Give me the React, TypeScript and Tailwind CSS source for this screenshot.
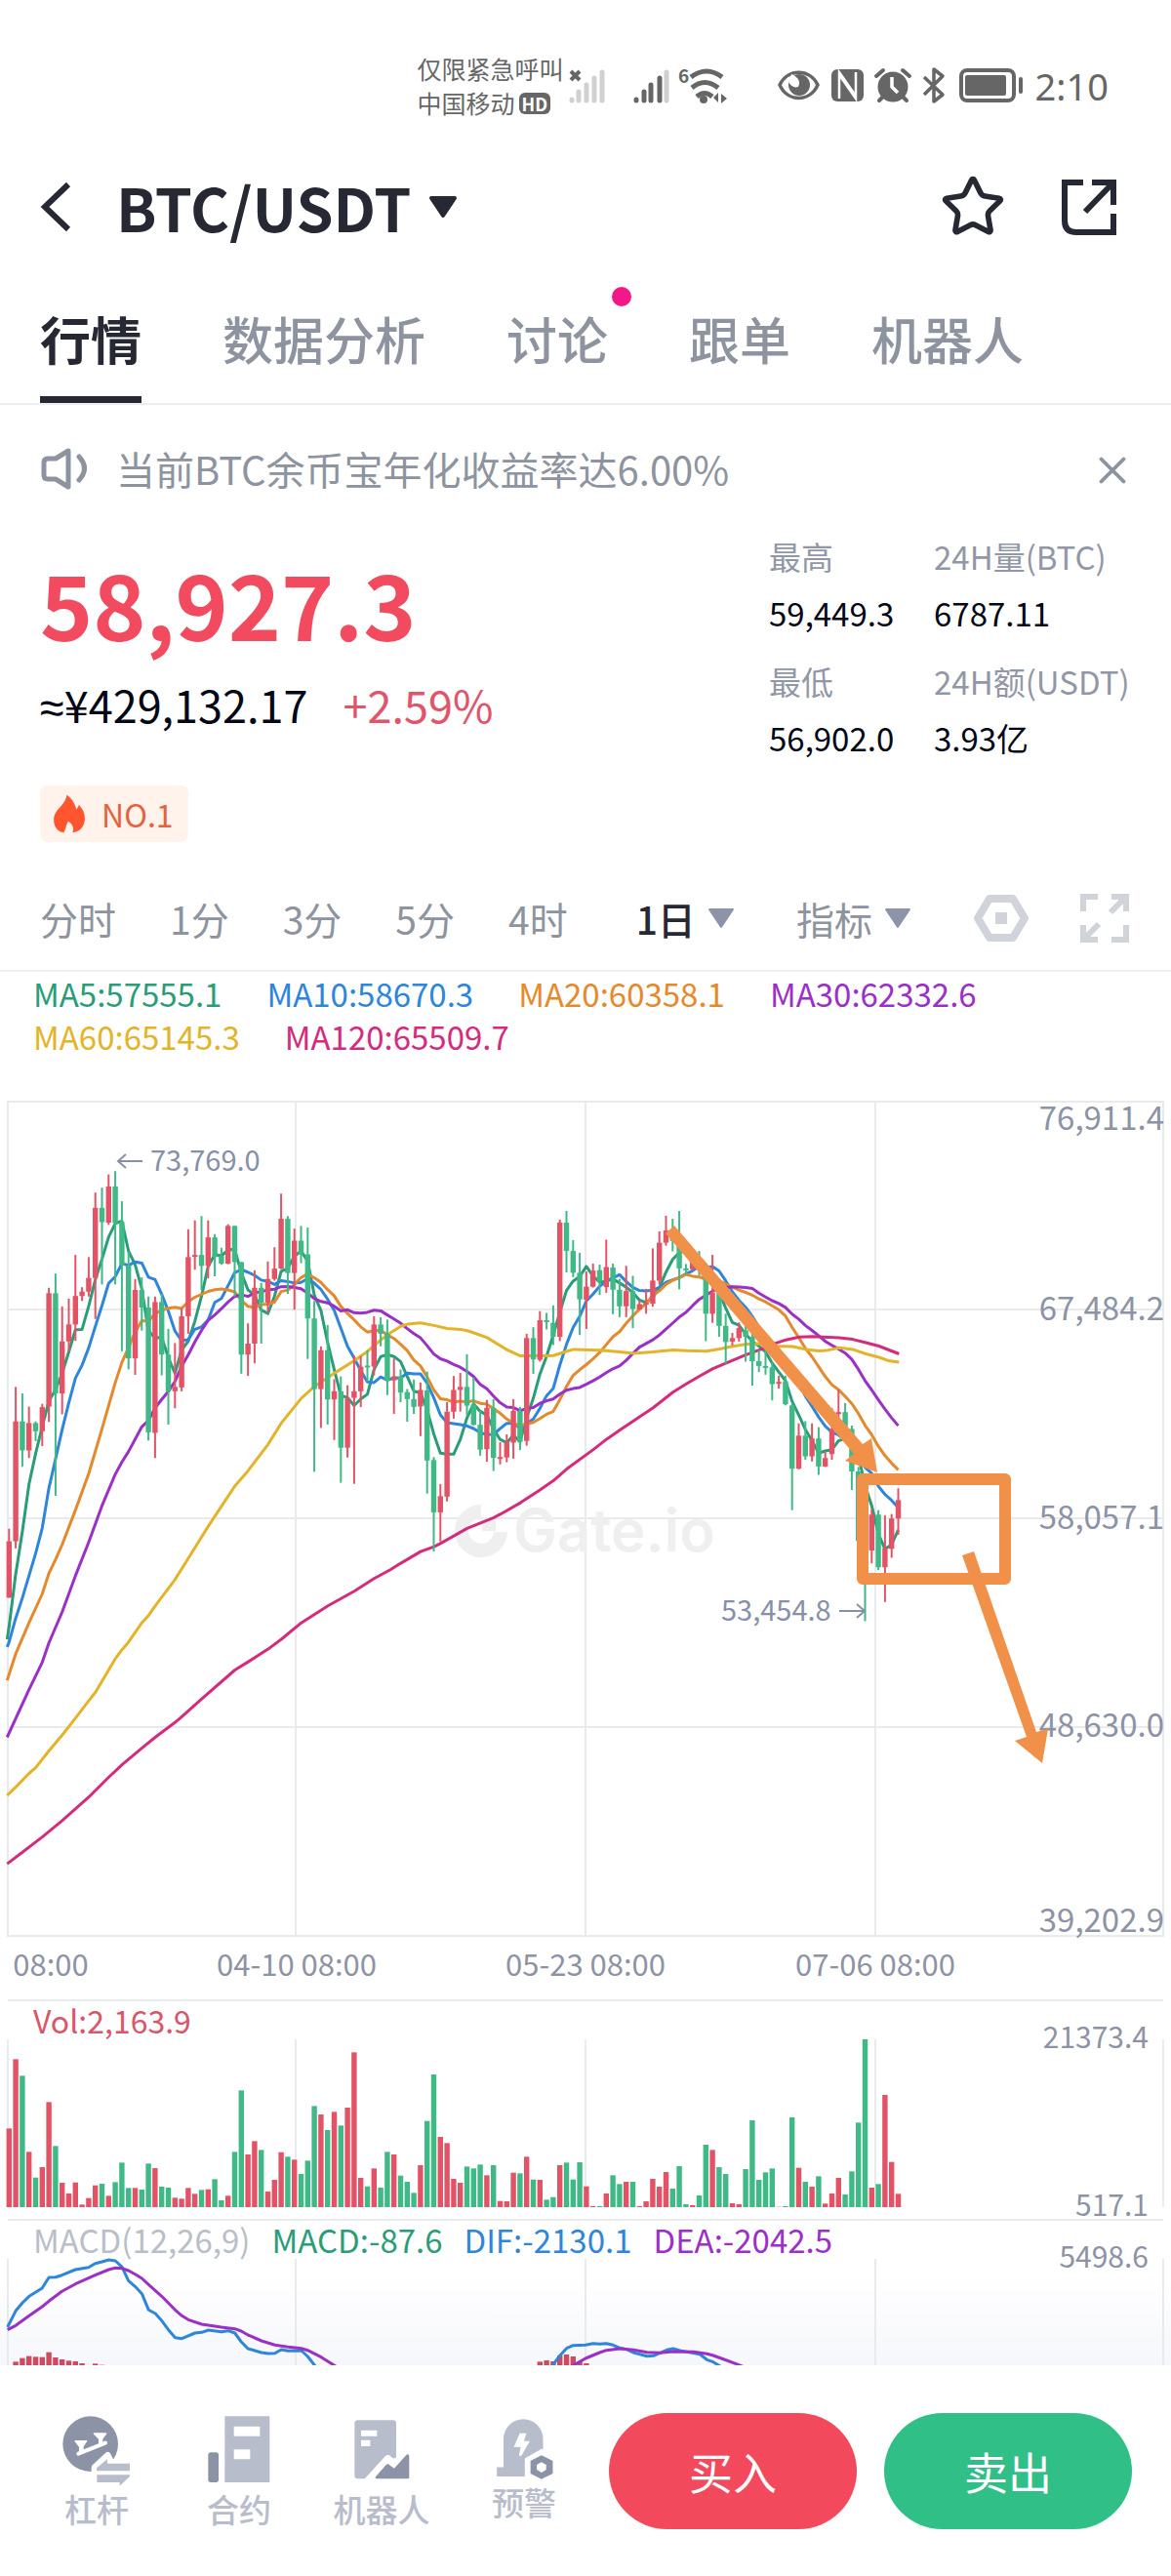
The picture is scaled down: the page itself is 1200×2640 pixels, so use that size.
import React from "react";
import { Star, X } from "lucide-react";

const RED = "#e35365";
const GREEN = "#3fb986";
const FONT = '"Noto Sans CJK SC", "Noto Sans", sans-serif';

type Candle = [string, number, number, number, number];
type Point = [number, number];

/* direction, high, body top, body bottom, low */
const BLOCK_A: Candle[] = [
  ["r", 796, 819, 922, 922], ["r", 537, 600, 819, 832], ["g", 549, 600, 653, 683], ["r", 573, 603, 653, 667],
  ["g", 600, 603, 618, 636], ["r", 568, 574, 618, 645], ["r", 356, 366, 573, 601], ["g", 330, 366, 549, 736],
  ["r", 390, 454, 549, 587], ["r", 376, 423, 454, 473], ["r", 296, 371, 423, 453], ["r", 355, 363, 371, 380],
  ["r", 300, 338, 363, 372], ["r", 182, 210, 338, 413], ["g", 173, 210, 236, 350], ["r", 149, 171, 237, 241],
  ["g", 143, 171, 238, 350], ["g", 198, 236, 315, 472], ["g", 290, 315, 485, 505], ["r", 340, 360, 485, 515],
  ["g", 337, 360, 392, 434], ["g", 372, 392, 620, 635], ["r", 372, 382, 621, 667], ["g", 367, 382, 478, 516],
  ["g", 431, 478, 545, 606], ["r", 457, 537, 545, 576], ["r", 393, 408, 538, 545], ["r", 249, 300, 408, 440],
  ["r", 233, 296, 299, 323], ["g", 225, 296, 316, 360], ["r", 233, 264, 316, 339], ["g", 258, 264, 300, 335],
  ["g", 283, 298, 312, 314], ["r", 240, 243, 312, 313], ["g", 243, 243, 309, 372], ["g", 309, 309, 478, 513],
  ["r", 421, 458, 478, 517], ["r", 324, 356, 458, 494], ["g", 347, 356, 383, 458], ["r", 308, 340, 383, 401],
  ["r", 282, 321, 340, 343], ["r", 184, 230, 321, 322], ["g", 225, 230, 329, 367], ["r", 248, 270, 329, 396],
  ["g", 243, 270, 295, 311], ["g", 246, 295, 412, 486], ["g", 380, 412, 541, 692], ["r", 463, 470, 541, 612],
  ["g", 424, 470, 560, 606], ["r", 523, 545, 560, 634], ["g", 518, 545, 648, 712], ["r", 534, 558, 648, 666],
  ["r", 480, 545, 557, 714], ["r", 481, 500, 545, 574], ["g", 470, 498, 501, 527], ["r", 408, 423, 500, 516],
  ["g", 410, 423, 440, 463], ["g", 414, 440, 526, 552],
];
const BLOCK_B: Candle[] = [
  ["r", 610, 651, 660, 737], ["g", 635, 651, 688, 710], ["g", 680, 687, 703, 755], ["g", 658, 703, 721, 737],
  ["r", 665, 682, 720, 788], ["g", 640, 683, 844, 920], ["g", 836, 843, 963, 1053], ["r", 898, 926, 963, 1030],
  ["r", 710, 732, 927, 938], ["r", 650, 682, 732, 748], ["r", 643, 675, 682, 732], ["g", 600, 675, 718, 741],
  ["g", 653, 716, 762, 764], ["g", 730, 762, 819, 833], ["r", 705, 723, 818, 847], ["g", 703, 723, 838, 868],
  ["r", 802, 836, 838, 853], ["r", 784, 801, 837, 848], ["r", 703, 730, 803, 840], ["g", 721, 730, 801, 820],
  ["r", 553, 563, 799, 810], ["g", 538, 563, 612, 645], ["r", 501, 522, 613, 617], ["g", 505, 522, 526, 543],
  ["g", 488, 528, 560, 579], ["r", 291, 298, 560, 570], ["g", 271, 298, 363, 412], ["g", 338, 363, 413, 423],
  ["g", 367, 413, 474, 556], ["r", 410, 445, 475, 542], ["r", 392, 408, 445, 447], ["g", 394, 407, 433, 464],
  ["r", 337, 400, 446, 459], ["g", 392, 401, 452, 508], ["g", 427, 452, 490, 515], ["r", 397, 455, 490, 515],
  ["g", 420, 455, 496, 540], ["r", 478, 485, 497, 499], ["r", 450, 482, 485, 507], ["r", 357, 431, 484, 491],
  ["r", 318, 344, 431, 440], ["r", 282, 316, 344, 351], ["g", 289, 318, 340, 364], ["g", 271, 330, 403, 451],
  ["g", 393, 403, 406, 418], ["r", 370, 380, 405, 408], ["g", 363, 380, 400, 420], ["g", 390, 400, 507, 570],
  ["r", 372, 458, 507, 528], ["g", 450, 460, 535, 560], ["g", 507, 535, 572, 622], ["r", 551, 563, 571, 580],
  ["r", 527, 540, 563, 571], ["g", 520, 545, 560, 617], ["g", 550, 560, 616, 672], ["g", 590, 616, 627, 641],
  ["g", 592, 627, 630, 647],
];
const BLOCK_C: Candle[] = [
  ["g", 480, 490, 520, 549], ["r", 505, 516, 519, 528], ["g", 505, 515, 556, 558], ["g", 556, 558, 671, 745],
  ["r", 590, 612, 671, 672], ["g", 586, 612, 649, 655], ["r", 590, 617, 649, 658], ["g", 597, 617, 667, 682],
  ["r", 640, 652, 667, 668], ["r", 563, 600, 645, 655], ["r", 530, 570, 573, 580], ["g", 554, 570, 597, 600],
  ["g", 594, 600, 676, 709], ["g", 668, 676, 800, 805], ["g", 790, 800, 860, 943], ["r", 744, 753, 817, 840],
  ["g", 745, 753, 847, 852], ["r", 754, 813, 847, 909], ["r", 752, 760, 814, 830], ["r", 706, 727, 760, 789],
];

const TOP = 1120;
const scaleBlock = (rows: Candle[], unit: number): Candle[] =>
  rows.map(([d, a, b, c, e]): Candle => [d, TOP + a / unit, TOP + b / unit, TOP + c / unit, TOP + e / unit]);

const CANDLES: Candle[] = [...scaleBlock(BLOCK_A, 1.782), ...scaleBlock(BLOCK_B, 2.24), ...scaleBlock(BLOCK_C, 1.742)];
const CLOSES = CANDLES.map((c) => (c[0] === "r" ? c[2] : c[3]));
const cx = (i: number) => 9.3 + 6.8 * i;

const seg = (points: Point[], x0: number, unit: number): Point[] =>
  points.map(([x, y]): Point => [x0 + x / 3, TOP + y / unit]);

/* moving average of the closes, led in by the part older than the first candle */
function average(n: number, lead: Point[]): Point[] {
  const out = seg(lead, 0, 1.782);
  for (let i = n - 1; i < CLOSES.length; i++) {
    let sum = 0;
    for (let k = i - n + 1; k <= i; k++) sum += CLOSES[k];
    out.push([cx(i), sum / n]);
  }
  return out;
}

const MA5 = average(5, [[22, 998], [28, 975], [48, 880], [69, 800], [89, 715]]);
const MA10 = average(10, [[22, 1012], [28, 1003], [48, 960], [69, 922], [89, 882], [110, 840], [130, 795], [150, 723], [171, 668], [191, 615]]);
const MA20 = average(20, [[22, 1073], [48, 1025], [89, 968], [130, 915], [150, 878], [171, 852], [191, 825], [232, 762], [273, 695], [313, 615], [354, 530], [375, 492], [395, 465]]);
const MA30 = average(30, [[22, 1177], [89, 1090], [130, 1040], [150, 1005], [191, 948], [232, 882], [273, 820], [313, 755], [354, 697], [375, 674], [395, 655], [436, 610], [457, 598], [477, 575], [497, 560], [518, 545], [538, 527], [558, 500], [579, 478], [599, 455]]);
const MA60: Point[] = [
  ...seg([[22, 1283], [48, 1268], [89, 1243], [110, 1232], [150, 1202], [191, 1173], [232, 1142], [273, 1110], [293, 1095], [354, 1034], [375, 1017], [395, 1003], [436, 968], [457, 954], [477, 937], [538, 889], [579, 850], [640, 792], [722, 718], [763, 690], [824, 642], [865, 603], [926, 558], [967, 536], [1028, 512], [1089, 489], [1130, 472], [1171, 451]], 0, 1.782),
  ...seg([[0, 551], [32, 536], [53, 531], [93, 528], [134, 534], [175, 541], [216, 543], [236, 546], [257, 551], [298, 562], [359, 590], [400, 604], [481, 604], [502, 603], [543, 593], [563, 589], [645, 591], [706, 595], [747, 598], [808, 595], [869, 590], [910, 592], [971, 593], [1012, 588], [1053, 582], [1094, 577], [1135, 576]], 400, 2.24),
  ...seg([[40, 452], [97, 453], [137, 458], [178, 461], [199, 460], [240, 455], [281, 458], [322, 466], [362, 472], [390, 478], [424, 481]], 780, 1.742),
];
const MA120: Point[] = [
  ...seg([[22, 1408], [69, 1387], [130, 1359], [191, 1329], [273, 1286], [334, 1250], [375, 1227], [436, 1197], [477, 1177], [538, 1150], [558, 1140], [620, 1107], [722, 1054], [763, 1039], [824, 1016], [865, 998], [926, 968], [1008, 937], [1089, 910], [1150, 887]], 0, 1.782),
  ...seg([[0, 1095], [32, 1080], [93, 1053], [134, 1042], [155, 1034], [236, 1000], [318, 975], [339, 967], [400, 941], [461, 911], [502, 890], [543, 863], [624, 819], [665, 795], [706, 774], [808, 723], [869, 687], [910, 668], [951, 650], [992, 633], [1033, 620], [1094, 601], [1135, 590]], 400, 2.24),
  ...seg([[15, 455], [40, 448], [76, 441], [117, 436], [158, 435], [240, 437], [281, 440], [322, 446], [362, 452], [424, 466]], 780, 1.742),
];

const VOLUME_TOPS = [
  664, 451, 502, 736, 815, 783, 583, 718, 831, 864, 830, 898, 878, 839, 834, 871, 829, 769, 847, 847, 852, 772, 786, 843,
  846, 877, 880, 847, 865, 853, 851, 820, 885, 871, 736, 547, 744, 703, 730, 858, 822, 737, 751, 760, 804, 763, 595, 621,
  669, 613, 655, 600, 430, 816, 842, 787, 846, 736, 744, 809, 828, 862, 777, 641, 498, 690, 709, 819, 831, 781, 787, 775,
  808, 777, 887, 888, 800, 802, 751, 821, 822, 883, 875, 777, 769, 821, 768, 842, 903, 903, 864, 808, 835, 828, 828, 903,
  888, 819, 843, 798, 849, 780, 897, 900, 870, 714, 730, 783, 804, 894, 897, 789, 639, 822, 799, 787, 905, 903, 630, 785,
  828, 843, 811, 895, 864, 816, 867, 796, 646, 390, 846, 835, 561, 767, 865,
];

const MACD_BARS: Point[] = [
  [1, 1381], [2, 1370], [3, 1364], [4, 1366], [5, 1367], [6, 1352], [7, 1368], [8, 1374], [9, 1378], [10, 1380],
  [11, 1386], [12, 1392], [13, 1387], [14, 1391], [15, 1392], [79, 1392], [80, 1381], [81, 1377], [82, 1380],
  [83, 1362], [84, 1359], [85, 1365], [86, 1380], [87, 1386], [88, 1392],
];
const macd = (points: Point[], x0: number): Point[] => points.map(([x, y]): Point => [x0 + x / 2.613, 1960 + y / 3]);
const DIF_A = macd([[20, 1275], [42, 1225], [60, 1200], [78, 1180], [95, 1168], [113, 1155], [131, 1122], [149, 1121], [166, 1115], [202, 1098], [237, 1091], [255, 1079], [273, 1074], [291, 1068], [309, 1071], [327, 1090], [344, 1132], [362, 1150], [380, 1172], [398, 1222], [416, 1233], [433, 1255], [451, 1283], [469, 1307], [487, 1310], [522, 1293], [540, 1291], [558, 1284], [593, 1289], [611, 1286], [629, 1293], [646, 1320], [664, 1341], [700, 1353], [718, 1356], [736, 1355], [753, 1344], [771, 1348], [807, 1347], [824, 1365], [845, 1396]], 0);
const DIF_B = [
  ...macd([[1477, 1396], [1500, 1361], [1517, 1340], [1535, 1331]], 0),
  ...macd([[0, 1330], [20, 1325], [38, 1327], [56, 1325], [74, 1330], [92, 1339], [110, 1343], [128, 1353], [165, 1364], [182, 1363], [200, 1354], [218, 1345], [235, 1341], [253, 1347], [271, 1351], [306, 1358], [325, 1375], [342, 1382], [362, 1396]], 600),
];
const DEA_A = macd([[20, 1283], [42, 1270], [78, 1240], [113, 1212], [131, 1195], [166, 1165], [202, 1142], [255, 1115], [291, 1098], [309, 1093], [327, 1094], [344, 1101], [362, 1112], [380, 1125], [398, 1144], [433, 1180], [469, 1222], [487, 1240], [504, 1252], [540, 1266], [593, 1275], [629, 1280], [646, 1287], [664, 1299], [700, 1317], [736, 1330], [771, 1336], [807, 1340], [824, 1346], [860, 1367], [900, 1396]], 0);
const DEA_B = [
  ...macd([[1530, 1396]], 0),
  ...macd([[0, 1371], [38, 1353], [56, 1346], [92, 1341], [128, 1345], [165, 1352], [200, 1354], [235, 1350], [289, 1351], [325, 1357], [342, 1362], [378, 1377], [422, 1396]], 600),
];

const GRID_X = [8, 303, 600, 897, 1192];
const GRID_Y = [1129, 1342, 1556, 1770, 1984];

function Line({ points, color }: { points: Point[]; color: string }) {
  return (
    <polyline
      points={points.map(([x, y]) => `${x.toFixed(1)},${y.toFixed(1)}`).join(" ")}
      fill="none"
      stroke={color}
      strokeWidth={3}
      strokeLinejoin="round"
    />
  );
}

function Verticals({ y1, y2 }: { y1: number; y2: number }) {
  return (
    <g stroke="#e8eaeb" strokeWidth={2}>
      {GRID_X.map((x) => (
        <line key={x} x1={x} x2={x} y1={y1} y2={y2} />
      ))}
    </g>
  );
}

function PriceChart() {
  return (
    <svg viewBox="0 1100 1200 949" className="mt-4 block h-auto w-full" fontFamily={FONT} role="img" aria-label="BTC/USDT">
      <Verticals y1={1128} y2={1985} />
      <g stroke="#e8eaeb" strokeWidth={2}>
        {GRID_Y.map((y) => (
          <line key={y} x1={7} x2={1193} y1={y} y2={y} />
        ))}
      </g>
      <g fill="#efefef">
        <path d="M493 1542 A27 27 0 1 0 520 1570 H506 A13 13 0 1 1 493 1556 Z" />
        <rect x="494" y="1555" width="14" height="14" />
        <text x="526" y="1590" fontFamily="Inter, sans-serif" fontWeight={600} fontSize="60">
          Gate.io
        </text>
      </g>
      <Line points={MA5} color="#2a9d78" />
      <Line points={MA10} color="#2d86db" />
      <Line points={MA20} color="#e58a2c" />
      <Line points={MA30} color="#9b30c8" />
      <Line points={MA60} color="#e3b42a" />
      <Line points={MA120} color="#d42b7d" />
      {CANDLES.map(([d, high, top, bottom, low], i) => (
        <g key={i} fill={d === "r" ? RED : GREEN}>
          <rect x={cx(i) - 1} y={high} width={2} height={low - high} />
          <rect x={cx(i) - 2.7} y={top} width={5.4} height={Math.max(2, bottom - top)} />
        </g>
      ))}
      <g fill="#8690a8" fontSize="29">
        <text x="154" y="1200">73,769.0</text>
        <text x="739" y="1661">53,454.8</text>
      </g>
      <g stroke="#8690a8" strokeWidth={2} fill="none">
        <path d="M146 1190 H121 M129 1183 L121 1190 L129 1197" />
        <path d="M860 1651 H886 M878 1644 L886 1651 L878 1658" />
      </g>
      <g fill="#8d93a5" fontSize="33" textAnchor="end">
        <text x="1193" y="1158">76,911.4</text>
        <text x="1193" y="1353">67,484.2</text>
        <text x="1193" y="1567">58,057.1</text>
        <text x="1193" y="1780">48,630.0</text>
        <text x="1193" y="1980">39,202.9</text>
      </g>
      <g fill="#8d93a5" fontSize="31" textAnchor="middle">
        <text x="52" y="2025">08:00</text>
        <text x="304" y="2025">04-10 08:00</text>
        <text x="600" y="2025">05-23 08:00</text>
        <text x="897" y="2025">07-06 08:00</text>
      </g>
      <g fill="#f19149">
        <path d="M682 1264 L691 1256 L884 1480 L893 1474 L899 1509 L866 1497 L875 1490 Z" />
        <path d="M986 1594 L998 1590 L1062 1775 L1074 1772 L1068 1807 L1040 1784 L1052 1780 Z" />
      </g>
      <rect x="884" y="1516" width="146" height="102" fill="none" stroke="#f19149" strokeWidth={12} strokeLinejoin="round" />
    </svg>
  );
}

function VolumeChart() {
  return (
    <svg viewBox="0 2089 1200 185" className="block h-auto w-full overflow-visible" fontFamily={FONT} role="img" aria-label="Vol">
      <Verticals y1={2090} y2={2262} />
      {VOLUME_TOPS.map((t, i) => (
        <rect key={i} x={cx(i) - 2.7} y={1960 + t / 3} width={5.4} height={302 - t / 3} fill={CANDLES[i][0] === "r" ? RED : GREEN} />
      ))}
      <g fill="#8d93a5" fontSize="30" textAnchor="end">
        <text x="1177" y="2099">21373.4</text>
        <text x="1177" y="2271">517.1</text>
      </g>
    </svg>
  );
}

function MacdChart() {
  return (
    <svg viewBox="0 2314 1200 110" className="block h-auto w-full overflow-visible" fontFamily={FONT} role="img" aria-label="MACD">
      <defs>
        <linearGradient id="fade" x1="0" x2="0" y1="0" y2="1">
          <stop offset="0" stopColor="#ffffff" />
          <stop offset="1" stopColor="#f6f7fb" />
        </linearGradient>
        <clipPath id="macd-area">
          <rect x="0" y="2310" width="1200" height="114" />
        </clipPath>
      </defs>
      <rect x="0" y="2330" width="1200" height="94" fill="url(#fade)" />
      <Verticals y1={2315} y2={2424} />
      <g clipPath="url(#macd-area)">
        {MACD_BARS.map(([i, t]) => (
          <rect key={i} x={cx(i) - 2.7} y={1960 + t / 3} width={5.4} height={464 - t / 3} fill="#cf4a5f" />
        ))}
        <Line points={DIF_A} color="#2d86db" />
        <Line points={DIF_B} color="#2d86db" />
        <Line points={DEA_A} color="#9b30c8" />
        <Line points={DEA_B} color="#9b30c8" />
      </g>
      <text x="1177" y="2324" fill="#8d93a5" fontSize="30" textAnchor="end">
        5498.6
      </text>
    </svg>
  );
}

function StatusBar() {
  return (
    <div className="flex h-[140px] items-end justify-end pr-[64px] pb-[15px] text-[#666666]">
      <div className="flex h-[74px] items-center">
        <div className="mr-1 text-[25px] leading-[35px]">
          <div>仅限紧急呼叫</div>
          <div className="flex items-center gap-1">
            中国移动
            <span className="rounded-md bg-[#666666] px-[3px] text-lg leading-[22px] font-bold text-white">HD</span>
          </div>
        </div>
        <svg viewBox="582 66 164 44" className="h-[44px] w-[164px] overflow-visible" fill="none" aria-hidden="true">
          <g stroke="#d0d0d0" strokeWidth="5" strokeLinecap="round">
            <path d="M586 102 V103 M593 94 V103 M601 87 V103 M609 80 V103 M617 74 V103 M683 74 V103" />
          </g>
          <path d="M585 73 L594 82 M594 73 L585 82" stroke="#666" strokeWidth="4" />
          <g stroke="#666" strokeWidth="5" strokeLinecap="round">
            <path d="M652 102 V103 M660 94 V103 M667 87 V103 M676 80 V103" />
          </g>
          <text x="695" y="85" fontSize="19" fontWeight="700" fill="#666">6</text>
          <g stroke="#666" strokeWidth="5">
            <path d="M708 79 Q724 67 740 79 M709 90 Q722 79 736 90 M714 99 Q722 92 730 99" />
          </g>
          <circle cx="721" cy="102" r="4" fill="#666" />
          <path d="M736 95 V105 L731 100 Z M739 96 V106 L745 101 Z" fill="#666" />
        </svg>
      </div>
      <div className="ml-[51px] flex h-[74px] items-center gap-[12px]">
        <svg viewBox="796 68 252 42" className="h-[42px] w-[252px]" fill="none" stroke="#666" aria-hidden="true">
          <path d="M798 88 C806 71 829 71 837 88 C829 106 806 106 798 88 Z" strokeWidth="3.5" />
          <circle cx="818" cy="88" r="11" fill="#666" stroke="none" />
          <path d="M810 77 Q821 82 817 90 Q811 92 807 85 Z" fill="#fff" stroke="none" />
          <rect x="851" y="72" width="33" height="33" rx="6" fill="#666" stroke="none" />
          <path d="M859 102 V75 L875 98 M876 75 V102 L860 79" stroke="#fff" strokeWidth="2.5" />
          <circle cx="914" cy="90" r="15.5" fill="#666" stroke="none" />
          <path d="M897 79 L904 73 M931 79 L924 73 M903 101 L900 104 M925 101 L928 104" strokeWidth="4" strokeLinecap="round" />
          <path d="M913 80 V90 L919 96" stroke="#fff" strokeWidth="3.5" />
          <path d="M946 80 L965 98 L956 105 V72 L965 79 L946 98" strokeWidth="3.5" strokeLinejoin="round" />
          <rect x="984" y="73" width="54" height="31" rx="6" strokeWidth="4" />
          <rect x="988" y="78" width="42" height="21" rx="2" fill="#666" stroke="none" />
          <path d="M1045 82 V95" strokeWidth="4" strokeLinecap="round" />
        </svg>
        <span className="text-[38px] leading-[40px]" style={{ fontFamily: '"Noto Sans", sans-serif' }}>
          2:10
        </span>
      </div>
    </div>
  );
}

function Header() {
  return (
    <header className="flex h-[144px] items-center justify-between pr-[54px] pl-[40px] text-[#262933]">
      <div className="flex items-center">
        <button type="button" aria-label="返回">
          <svg viewBox="40 186 34 56" className="h-[56px] w-[34px]" fill="none" stroke="currentColor" strokeWidth="6">
            <path d="M70 191 L46 214 L70 237" />
          </svg>
        </button>
        <button type="button" className="ml-[45px] flex items-center gap-[18px]">
          <h1 className="text-[61px] leading-[72px] font-bold">BTC/USDT</h1>
          <svg viewBox="0 0 30 24" className="h-[24px] w-[30px]" fill="currentColor" stroke="currentColor" strokeWidth="4" strokeLinejoin="round">
            <path d="M3 3 H27 L15 21 Z" />
          </svg>
        </button>
      </div>
      <div className="flex items-center gap-[56px]">
        <button type="button" aria-label="收藏">
          <Star className="h-[68px] w-[68px]" strokeWidth={2} />
        </button>
        <button type="button" aria-label="分享">
          <svg viewBox="1085 183 59 59" className="h-[59px] w-[59px]" fill="none" stroke="currentColor" strokeWidth="6">
            <path d="M1108 187 H1089 V226 Q1089 238 1101 238 H1139 V219" />
            <path d="M1117 187 H1139 V210 M1138 188 L1110 217" />
          </svg>
        </button>
      </div>
    </header>
  );
}

const TABS = ["行情", "数据分析", "讨论", "跟单", "机器人"];

function Tabs() {
  return (
    <nav className="flex h-[131px] gap-[83px] border-b-2 border-[#eceef3] px-[41px] text-[52px] leading-[60px]">
      {TABS.map((tab, i) => (
        <button
          key={tab}
          type="button"
          className={i === 0 ? "relative pb-1 font-bold text-[#262933]" : "relative pb-1 font-medium text-[#8d949f]"}
        >
          {tab}
          {i === 0 && <span className="absolute bottom-0 left-0 h-[7px] w-full bg-[#262933]" />}
          {tab === "讨论" && <span className="absolute top-[10px] -right-6 h-[20px] w-[20px] rounded-full bg-[#f21888]" />}
        </button>
      ))}
    </nav>
  );
}

function Notice() {
  return (
    <div className="flex h-[90px] items-end justify-between pr-[37px] pl-[41px] text-[#8d949f]">
      <div className="flex items-center gap-[28px]">
        <svg viewBox="41 459 50 45" className="h-[45px] w-[50px]" fill="none" stroke="currentColor" strokeWidth="5" strokeLinejoin="round" strokeLinecap="round">
          <path d="M70 463 L57 471 H49 Q45 471 45 475 V488 Q45 492 49 492 H57 L70 500 Z" />
          <path d="M81 469 Q92 481 81 493" />
        </svg>
        <p className="text-[40px] leading-[50px]">当前BTC余币宝年化收益率达6.00%</p>
      </div>
      <button type="button" aria-label="关闭">
        <X className="h-[46px] w-[46px]" strokeWidth={2} />
      </button>
    </div>
  );
}

const STATS = [
  ["最高", "59,449.3", "24H量(BTC)", "6787.11"],
  ["最低", "56,902.0", "24H额(USDT)", "3.93亿"],
];

function Summary() {
  return (
    <section className="flex justify-between pt-[36px] pr-[40px] pl-[41px]">
      <div className="pt-[28px]">
        <div className="text-[92px] leading-[96px] font-bold text-[#f24b5f]">58,927.3</div>
        <div className="mt-[29px] flex h-[56px] gap-[36px] text-[45px] leading-[56px]">
          <span className="text-[#040816]" style={{ fontFamily: '"Liberation Sans", sans-serif' }}>
            ≈<span style={{ fontFamily: FONT }}>¥429,132.17</span>
          </span>
          <span className="text-[#e0556a]">+2.59%</span>
        </div>
        <div className="mt-[55px] flex h-[58px] w-fit items-center gap-[16px] rounded-lg bg-[#fff3eb] pr-[15px] pl-[13px]">
          <svg viewBox="138 768 90 104" className="h-[40px] w-[34px]" fill="#ff5630" aria-hidden="true" preserveAspectRatio="none">
            <path d="M176 770 C186 776 198 790 202 808 C206 804 208 800 209 796 C220 808 226 820 225 836 C223 856 210 868 192 870 C196 860 194 848 180 840 C174 848 174 862 168 870 C150 868 141 852 141 836 C142 806 172 800 176 770 Z" />
          </svg>
          <span className="text-[32px] leading-[40px] text-[#e4633f]">NO.1</span>
        </div>
      </div>
      <div className="flex flex-col gap-[12px] text-[33px] leading-[58px]">
        {STATS.map(([a, b, c, d]) => (
          <dl key={a} className="grid w-[372px] grid-cols-[169px_auto] whitespace-nowrap">
            <div>
              <dt className="text-[#9297a8]">{a}</dt>
              <dd className="text-[#040816]">{b}</dd>
            </div>
            <div>
              <dt className="text-[#9297a8]">{c}</dt>
              <dd className="text-[#040816]">{d}</dd>
            </div>
          </dl>
        ))}
      </div>
    </section>
  );
}

function Caret() {
  return (
    <svg viewBox="0 0 28 22" className="h-[22px] w-[28px]" fill="#8d93a8" stroke="#8d93a8" strokeWidth="2" strokeLinejoin="round">
      <path d="M2 2 H26 L14 20 Z" />
    </svg>
  );
}

function Intervals() {
  return (
    <div className="mt-6 flex h-[109px] items-center gap-[70px] border-b-2 border-[#eeeff5] pr-[43px] pl-[41px] text-[39px] leading-[50px] text-[#8d949f]">
      <div className="flex gap-[55px]">
        {["分时", "1分", "3分", "5分", "4时"].map((t) => (
          <button key={t} type="button">
            {t}
          </button>
        ))}
      </div>
      <div className="flex flex-1 items-center justify-between">
        <button type="button" className="flex items-center gap-3 font-medium text-[#262933]">
          1日
          <Caret />
        </button>
        <button type="button" className="flex items-center gap-3">
          指标
          <Caret />
        </button>
        <div className="flex gap-[52px]">
          <button type="button" aria-label="设置">
            <svg viewBox="0 0 58 50" className="h-[50px] w-[58px]" fill="none" stroke="#d0d4da" strokeWidth="8" strokeLinejoin="round">
              <path d="M17 5 H41 L53 25 L41 45 H17 L5 25 Z" />
              <rect x="23" y="19" width="12" height="12" fill="#d0d4da" stroke="none" />
            </svg>
          </button>
          <button type="button" aria-label="全屏">
            <svg viewBox="0 0 50 50" className="h-[50px] w-[50px]" fill="none" stroke="#d0d4da" strokeWidth="6">
              <path d="M18 3 H3 V18 M32 3 H47 V18 M47 3 L31 19 M3 32 V47 H18 M3 47 L19 31 M32 47 H47 V32" />
            </svg>
          </button>
        </div>
      </div>
    </div>
  );
}

function Legend() {
  return (
    <div className="px-[34px] text-[33px] leading-[44px]">
      <div className="flex gap-[46px]">
        <span className="text-[#2a9d78]">MA5:57555.1</span>
        <span className="text-[#2d86db]">MA10:58670.3</span>
        <span className="text-[#e58a2c]">MA20:60358.1</span>
        <span className="text-[#9b30c8]">MA30:62332.6</span>
      </div>
      <div className="flex gap-[46px]">
        <span className="text-[#e3b42a]">MA60:65145.3</span>
        <span className="text-[#d42b7d]">MA120:65509.7</span>
      </div>
    </div>
  );
}

const LIGHT = "#b8bdcb";
const DARK = "#8d93a6";

function LeverIcon() {
  return (
    <svg viewBox="44 47 208 216" className="h-[72px] w-[70px]">
      <circle cx="129" cy="133" r="85" fill={DARK} />
      <g fill="#fff" stroke="#fff" strokeLinejoin="round" strokeLinecap="round">
        <path d="M92 163 L175 130" strokeWidth="12" />
        <path d="M82 124 H117 L106 140 V158 H96 V142 Z M140 101 H177 L165 117 V132 H156 V118 Z" strokeWidth="4" />
        <path d="M142 225 V205 L182 168 L193 190 H230 V225 Z" strokeWidth="20" />
      </g>
      <g fill={LIGHT}>
        <path d="M148 216 V207 L181 180 V193 H250 V216 Z" />
        <path d="M149 228 H250 V233 L219 262 V251 H149 Z" />
      </g>
    </svg>
  );
}

function ContractIcon() {
  return (
    <svg viewBox="476 47 192 216" className="h-[72px] w-[64px]">
      <rect x="477" y="159" width="32" height="92" rx="8" fill={DARK} />
      <path fillRule="evenodd" d="M528 48 H666 V251 H528 Z M556 79 V109 H636 V79 Z M556 150 V180 H606 V150 Z" fill={LIGHT} />
    </svg>
  );
}

function RobotIcon() {
  return (
    <svg viewBox="908 47 200 216" className="h-[72px] w-[68px]">
      <rect x="925" y="60" width="128" height="180" rx="10" fill={LIGHT} />
      <path d="M945 91 H994 V109 H945 Z M945 121 H973 V140 H945 Z" fill="#fff" />
      <path d="M955 241 L1020 170 Q1030 163 1038 173 L1046 178 L1060 170 V241 Z" fill="#fff" />
      <path d="M988 236 L1022 197 Q1029 192 1034 199 L1047 208 L1084 167 Q1093 161 1093 172 V236 Q1093 240 1088 240 H992 Z" fill={DARK} />
    </svg>
  );
}

function AlertIcon() {
  return (
    <svg viewBox="1346 47 188 202" className="h-[65px] w-[63px]">
      <path d="M1352 240 V210 H1373 V120 A63 63 0 0 1 1499 120 V240 Z" fill={LIGHT} />
      <path d="M1425 102 H1446 L1438 127 H1457 L1430 174 H1422 L1428 146 H1406 Z" fill="#fff" />
      <path d="M1441 249 V182 L1494 152 L1534 170 V249 Z" fill="#fff" />
      <path fillRule="evenodd" d="M1494 172 L1530 190 V230 L1494 248 L1459 230 V190 Z M1494 194 L1479 202 V218 L1494 227 L1509 218 V202 Z" fill={DARK} />
    </svg>
  );
}

const NAV = [
  { label: "杠杆", icon: <LeverIcon /> },
  { label: "合约", icon: <ContractIcon /> },
  { label: "机器人", icon: <RobotIcon /> },
  { label: "预警", icon: <AlertIcon /> },
];

function Footer() {
  return (
    <footer className="flex min-h-[216px] items-start bg-white pt-[49px] pr-[40px] pl-[26px]">
      <nav className="grid w-[584px] grid-cols-4 pt-[3px]">
        {NAV.map(({ label, icon }) => (
          <a key={label} href="#" className="flex flex-col items-center gap-[3px] text-[33px] leading-[40px] font-medium text-[#b8bdcb]">
            {icon}
            {label}
          </a>
        ))}
      </nav>
      <div className="ml-[14px] flex flex-1 gap-[28px] text-[45px] text-white">
        <button type="button" className="h-[119px] flex-1 rounded-full bg-[#f2495d]">
          买入
        </button>
        <button type="button" className="h-[119px] flex-1 rounded-full bg-[#31bf88]">
          卖出
        </button>
      </div>
    </footer>
  );
}

export default function App() {
  return (
    <div className="w-full overflow-hidden bg-white" style={{ fontFamily: FONT }}>
      <StatusBar />
      <Header />
      <Tabs />
      <Notice />
      <Summary />
      <Intervals />
      <Legend />
      <PriceChart />
      <section>
        <div className="mx-2 h-[40px] border-t-2 border-[#e9ebec] px-[26px] text-[32px] leading-[38px] text-[#d9566a]">Vol:2,163.9</div>
        <VolumeChart />
      </section>
      <section>
        <div className="mx-2 flex h-[40px] gap-[22px] border-t-2 border-[#e9ebec] px-[26px] text-[33px] leading-[38px]">
          <span className="text-[#b9bec9]">MACD(12,26,9)</span>
          <span className="text-[#2a9d78]">MACD:-87.6</span>
          <span className="text-[#2d86db]">DIF:-2130.1</span>
          <span className="text-[#9b30c8]">DEA:-2042.5</span>
        </div>
        <MacdChart />
      </section>
      <Footer />
    </div>
  );
}
